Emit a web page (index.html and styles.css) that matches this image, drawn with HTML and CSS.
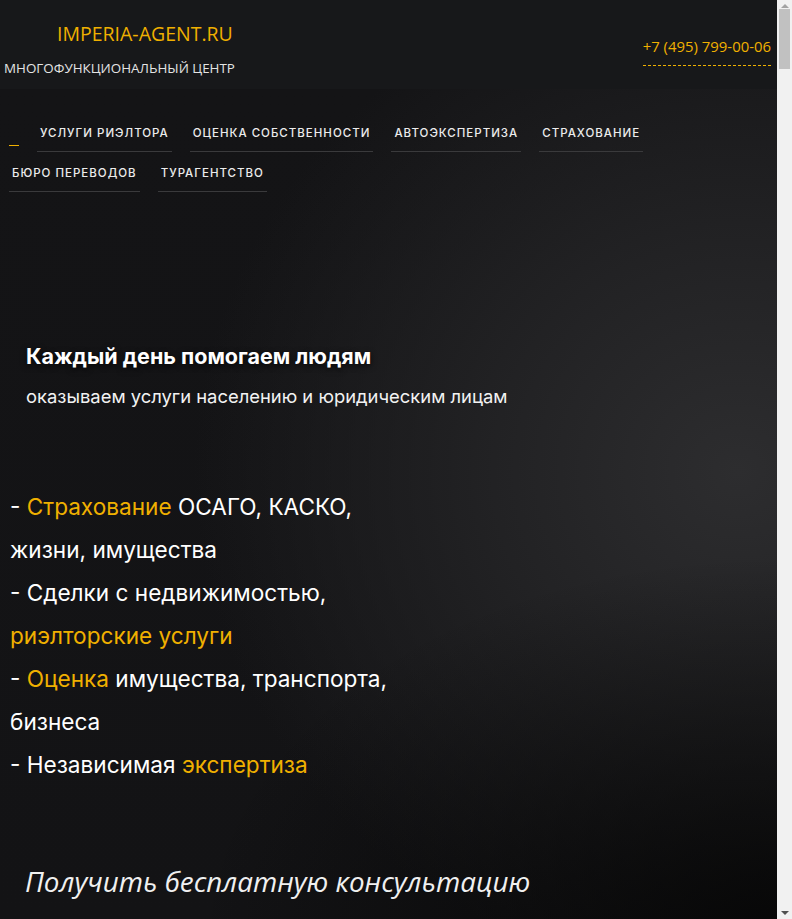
FILE: index.html
```html
<!DOCTYPE html>
<html lang="ru">
<head>
  <meta charset="UTF-8" />
  <meta name="viewport" content="width=device-width, initial-scale=1.0"/>
  <title>IMPERIA-AGENT.RU - Многофункциональный центр</title>
  <link rel="stylesheet" href="styles.css">
</head>
<body>

<div class="page">
  <header class="site-header">
    <div class="brand">
      <a class="brand-logo" href="#">IMPERIA-AGENT.RU</a>
      <div class="brand-sub">МНОГОФУНКЦИОНАЛЬНЫЙ ЦЕНТР</div>
    </div>
    <a class="phone" href="#">+7 (495) 799-00-06</a>
  </header>

  <section class="hero">
    <nav class="nav-main">
      <span class="nav-active"></span>
      <a href="#">Услуги риэлтора</a>
      <a href="#">Оценка собственности</a>
      <a href="#">Автоэкспертиза</a>
      <a href="#">Страхование</a>
      <a href="#">Бюро переводов</a>
      <a href="#">Турагентство</a>
    </nav>

    <div class="hero-head">
      <h1>Каждый день помогаем людям</h1>
      <p>оказываем услуги населению и юридическим лицам</p>
    </div>

    <div class="services">
      <p>- <span class="hl">Страхование</span> ОСАГО, КАСКО,<br>жизни, имущества</p>
      <p>- Сделки с недвижимостью,<br><span class="hl">риэлторские услуги</span></p>
      <p>- <span class="hl">Оценка</span> имущества, транспорта,<br>бизнеса</p>
      <p>- Независимая <span class="hl">экспертиза</span></p>
    </div>

    <h2 class="consult">Получить бесплатную консультацию</h2>
  </section>

  <section class="rest"></section>
</div>

<!-- browser scrollbar as seen in the screenshot -->
<div class="scrollbar">
  <span class="arrow-up"></span>
  <span class="thumb"></span>
  <span class="arrow-down"></span>
</div>

</body>
</html>
```

FILE: styles.css
```css
body {
  margin: 0;
  background-color: #111113;
  color: #fff;
  font-family: "Open Sans", sans-serif;
}

.page {
  margin-right: 15px;
}

.site-header {
  height: 89px;
  background-color: #17181a;
  display: flex;
  justify-content: space-between;
  align-items: flex-start;
  box-sizing: border-box;
}

.brand {
  padding: 21px 0 0 4px;
}

.brand-logo {
  display: block;
  margin-left: 53px;
  color: #f0b000;
  text-decoration: none;
  font-size: 19.5px;
  line-height: 26px;
}

.brand-sub {
  margin-top: 12px;
  color: #e4e4e4;
  font-size: 13.4px;
  line-height: 18px;
}

.phone {
  margin: 36px 6px 0 0;
  color: #f0b000;
  text-decoration: none;
  font-size: 14.9px;
  line-height: 21px;
  padding-bottom: 8px;
  border-bottom: 1px dashed #f0b000;
}

.hero {
  background:
    radial-gradient(ellipse 75% 45% at 100% 100%, rgba(5, 5, 5, 0.9) 0%, rgba(5, 5, 5, 0) 100%),
    radial-gradient(ellipse 70% 60% at 95% 45%, #2d2d2f 0%, #222224 45%, rgba(20, 20, 22, 0) 100%),
    linear-gradient(180deg, #141416 0%, #131315 100%);
  padding: 23px 0 40px;
}

.nav-main {
  display: flex;
  flex-wrap: wrap;
  align-items: flex-start;
  padding: 0 0 0 9px;
  max-width: 660px;
  column-gap: 18px;
  font-family: Inter, "Noto Sans", sans-serif;
}

.nav-active {
  width: 10px;
  height: 1px;
  margin-top: 33px;
  background-color: #f0b000;
}

.nav-main a {
  color: #ececec;
  text-decoration: none;
  text-transform: uppercase;
  font-size: 11.5px;
  font-weight: 500;
  letter-spacing: 1px;
  line-height: 14px;
  padding: 14px 3px 11px;
  border-bottom: 1px solid #3a3a3c;
}

.hero-head {
  padding: 149px 26px 0;
  font-family: Inter, "Noto Sans", sans-serif;
}

.hero-head h1 {
  margin: 0;
  font-size: 21.5px;
  font-weight: 700;
  line-height: 30px;
  text-shadow: 0 2px 6px rgba(0, 0, 0, 0.8);
}

.hero-head p {
  margin: 12px 0 0;
  font-size: 18.4px;
  line-height: 26px;
  color: #f2f2f2;
}

.services {
  padding: 76px 10px 0;
  font-family: Inter, "Noto Sans", sans-serif;
  font-size: 22.6px;
  line-height: 43px;
  font-weight: 400;
}

.services p {
  margin: 0;
}

.hl {
  color: #f0b000;
}

.consult {
  margin: 77px 0 0 25px;
  font-size: 27.8px;
  font-style: italic;
  font-weight: 400;
  line-height: 36px;
  color: #f0f0f0;
}

.rest {
  height: 12800px;
  background-color: #141416;
}

.scrollbar {
  position: fixed;
  top: 0;
  right: 0;
  bottom: 0;
  width: 15px;
  background-color: #f1f1f1;
  display: flex;
  flex-direction: column;
  align-items: center;
}

.arrow-up,
.arrow-down {
  width: 0;
  height: 0;
  border-left: 4px solid transparent;
  border-right: 4px solid transparent;
}

.arrow-up {
  margin-top: 4px;
  border-bottom: 4px solid #a3a3a3;
}

.arrow-down {
  margin-top: auto;
  margin-bottom: 4px;
  border-top: 4px solid #505050;
}

.thumb {
  margin-top: 1px;
  width: 11px;
  height: 60px;
  background-color: #c1c1c1;
}
```
